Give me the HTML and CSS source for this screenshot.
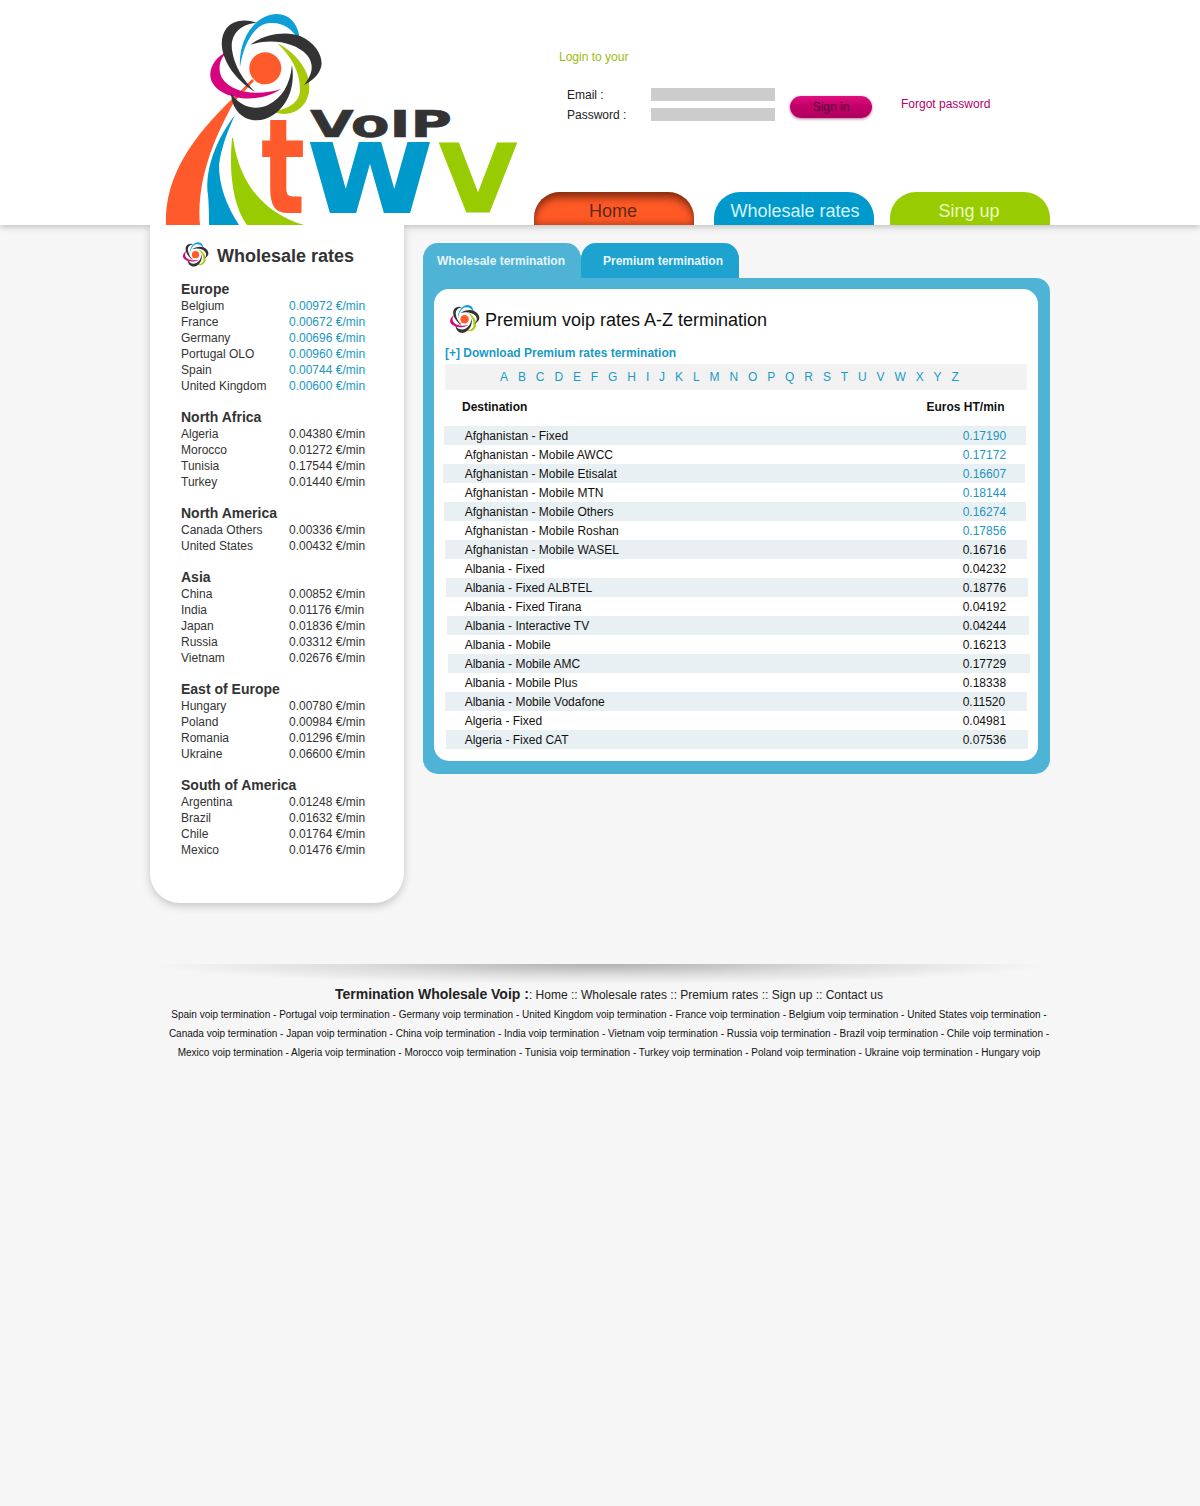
FILE: index.html
```html
<!DOCTYPE html>
<html lang="en">
<head>
<meta charset="utf-8">
<title>Wholesale rates</title>
<link rel="stylesheet" href="styles.css">
</head>
<body>
<header class="header">
  <div class="wrap header-in">
    <svg class="logo" viewBox="150 0 370 225" width="370" height="225" aria-label="tWV VoIP">
      <defs>
        <symbol id="flower" viewBox="206 11 118 113">
          <path fill="#ff5a2b" d="M232 100L252 79l2 2L234 102Z"/>
          <circle cx="265.300" cy="68.300" r="16" fill="#ff5a2b"/>
          <path fill="#d6057f" d="M228 51C213 58 207 72 212 82C220 98 255 106 281 89C260 96 232 94 222 78C217 68 220 58 228 51Z"/>
          <path fill="#a8c80a" d="M277 43C300 55 312 75 309 92C306 110 288 120 270 110C285 112 300 103 300 90C300 72 292 57 277 43Z"/>
          <path fill="#0f9fd8" d="M240 67C238 40 255 14 277 14C292 14 300 28 300 43C293 28 282 22 270 23C255 24 244 42 240 67Z"/>
          <path fill="#333" d="M255 92C228 75 218 50 223 35C228 20 245 18 257 23C240 24 230 35 232 50C234 65 243 80 255 92Z"/>
          <path fill="#333" d="M250 45C262 35 285 30 300 36C318 44 325 60 320 70C317 77 310 82 304 85C312 75 315 65 307 55C295 42 270 38 250 45Z"/>
          <path fill="#333" d="M292 65C296 90 285 112 265 119C250 124 232 115 231 93C240 107 255 111 268 105C282 98 290 85 292 65Z"/>
        </symbol>
      </defs>
      <path fill="#ff5a2b" d="M232 99C195 135 164 175 166 225L200 225C197 190 207 150 234 102Z"/>
      <path fill="#0099cc" d="M235 115C212 145 205 175 208 195C209 207 209 216 209 225L239 225C226 205 219 185 219 165C221 148 228 130 235 115Z"/>
      <path fill="#99cc00" d="M232 138C229 170 232 205 247 225L304 225C270 215 240 190 233 138Z"/>
      <use href="#flower" x="206" y="11" width="118" height="113"/>
      <text class="logo-t" x="261" y="213" textLength="44" lengthAdjust="spacingAndGlyphs">t</text>
      <text class="logo-voip" x="310" y="137" textLength="142" lengthAdjust="spacingAndGlyphs">VoIP</text>
      <text class="logo-w" x="308" y="211.500" textLength="124" lengthAdjust="spacingAndGlyphs">W</text>
      <text class="logo-v" x="439" y="211.500" textLength="78" lengthAdjust="spacingAndGlyphs">V</text>
    </svg>
    <div class="head-right">
      <div class="login">
        <p class="login-title">Login to your</p>
        <div class="login-form">
          <div class="fields">
            <div class="field"><span class="field-label">Email :</span><span class="input"></span></div>
            <div class="field"><span class="field-label">Password :</span><span class="input"></span></div>
          </div>
          <a class="signin">Sign in</a>
          <a class="forgot">Forgot password</a>
        </div>
      </div>
      <nav class="nav">
        <a class="nav-item nav-home">Home</a>
        <a class="nav-item nav-rates">Wholesale rates</a>
        <a class="nav-item nav-sign">Sing up</a>
      </nav>
    </div>
  </div>
</header>

<div class="wrap content">
  <aside class="side">
    <div class="side-title"><svg class="icon-s"><use href="#flower"/></svg><span>Wholesale rates</span></div>
    <section class="group">
      <h3>Europe</h3>
      <div class="rate blue"><span>Belgium</span><b>0.00972 €/min</b></div>
      <div class="rate blue"><span>France</span><b>0.00672 €/min</b></div>
      <div class="rate blue"><span>Germany</span><b>0.00696 €/min</b></div>
      <div class="rate blue"><span>Portugal OLO</span><b>0.00960 €/min</b></div>
      <div class="rate blue"><span>Spain</span><b>0.00744 €/min</b></div>
      <div class="rate blue"><span>United Kingdom</span><b>0.00600 €/min</b></div>
    </section>
    <section class="group">
      <h3>North Africa</h3>
      <div class="rate"><span>Algeria</span><b>0.04380 €/min</b></div>
      <div class="rate"><span>Morocco</span><b>0.01272 €/min</b></div>
      <div class="rate"><span>Tunisia</span><b>0.17544 €/min</b></div>
      <div class="rate"><span>Turkey</span><b>0.01440 €/min</b></div>
    </section>
    <section class="group">
      <h3>North America</h3>
      <div class="rate"><span>Canada Others</span><b>0.00336 €/min</b></div>
      <div class="rate"><span>United States</span><b>0.00432 €/min</b></div>
    </section>
    <section class="group">
      <h3>Asia</h3>
      <div class="rate"><span>China</span><b>0.00852 €/min</b></div>
      <div class="rate"><span>India</span><b>0.01176 €/min</b></div>
      <div class="rate"><span>Japan</span><b>0.01836 €/min</b></div>
      <div class="rate"><span>Russia</span><b>0.03312 €/min</b></div>
      <div class="rate"><span>Vietnam</span><b>0.02676 €/min</b></div>
    </section>
    <section class="group">
      <h3>East of Europe</h3>
      <div class="rate"><span>Hungary</span><b>0.00780 €/min</b></div>
      <div class="rate"><span>Poland</span><b>0.00984 €/min</b></div>
      <div class="rate"><span>Romania</span><b>0.01296 €/min</b></div>
      <div class="rate"><span>Ukraine</span><b>0.06600 €/min</b></div>
    </section>
    <section class="group">
      <h3>South of America</h3>
      <div class="rate"><span>Argentina</span><b>0.01248 €/min</b></div>
      <div class="rate"><span>Brazil</span><b>0.01632 €/min</b></div>
      <div class="rate"><span>Chile</span><b>0.01764 €/min</b></div>
      <div class="rate"><span>Mexico</span><b>0.01476 €/min</b></div>
    </section>
  </aside>

  <main class="main">
    <div class="tabs">
      <a class="tab tab-a">Wholesale termination</a>
      <a class="tab tab-b">Premium termination</a>
    </div>
    <div class="panel">
      <div class="card">
        <div class="card-title"><svg class="icon-m"><use href="#flower"/></svg><h1>Premium voip rates A-Z termination</h1></div>
        <a class="download">[+] Download Premium rates termination</a>
        <div class="alpha">
          <a>A</a><a>B</a><a>C</a><a>D</a><a>E</a><a>F</a><a>G</a><a>H</a><a>I</a><a>J</a><a>K</a><a>L</a><a>M</a><a>N</a><a>O</a><a>P</a><a>Q</a><a>R</a><a>S</a><a>T</a><a>U</a><a>V</a><a>W</a><a>X</a><a>Y</a><a>Z</a>
        </div>
        <div class="thead"><span>Destination</span><span>Euros HT/min</span></div>
        <div class="rows">
          <div class="row o1 blue"><span>Afghanistan - Fixed</span><span class="num">0.17190</span></div>
          <div class="row o1 blue"><span>Afghanistan - Mobile AWCC</span><span class="num">0.17172</span></div>
          <div class="row o0 blue"><span>Afghanistan - Mobile Etisalat</span><span class="num">0.16607</span></div>
          <div class="row o1 blue"><span>Afghanistan - Mobile MTN</span><span class="num">0.18144</span></div>
          <div class="row o1 blue"><span>Afghanistan - Mobile Others</span><span class="num">0.16274</span></div>
          <div class="row o1 blue"><span>Afghanistan - Mobile Roshan</span><span class="num">0.17856</span></div>
          <div class="row o2"><span>Afghanistan - Mobile WASEL</span><span class="num">0.16716</span></div>
          <div class="row o2"><span>Albania - Fixed</span><span class="num">0.04232</span></div>
          <div class="row o3"><span>Albania - Fixed ALBTEL</span><span class="num">0.18776</span></div>
          <div class="row o3"><span>Albania - Fixed Tirana</span><span class="num">0.04192</span></div>
          <div class="row o4"><span>Albania - Interactive TV</span><span class="num">0.04244</span></div>
          <div class="row o4"><span>Albania - Mobile</span><span class="num">0.16213</span></div>
          <div class="row o5"><span>Albania - Mobile AMC</span><span class="num">0.17729</span></div>
          <div class="row o5"><span>Albania - Mobile Plus</span><span class="num">0.18338</span></div>
          <div class="row o2"><span>Albania - Mobile Vodafone</span><span class="num">0.11520</span></div>
          <div class="row o2"><span>Algeria - Fixed</span><span class="num">0.04981</span></div>
          <div class="row o3"><span>Algeria - Fixed CAT</span><span class="num">0.07536</span></div>
        </div>
      </div>
    </div>
  </main>
</div>

<footer class="wrap footer">
  <div class="sep"></div>
  <div class="foot-text">
    <p class="foot-nav"><strong>Termination Wholesale Voip :</strong>: Home :: Wholesale rates :: Premium rates :: Sign up :: Contact us</p>
    <p class="foot-links">Spain voip termination - Portugal voip termination - Germany voip termination - United Kingdom voip termination - France voip termination - Belgium voip termination - United States voip termination -<br>Canada voip termination - Japan voip termination - China voip termination - India voip termination - Vietnam voip termination - Russia voip termination - Brazil voip termination - Chile voip termination -<br>Mexico voip termination - Algeria voip termination - Morocco voip termination - Tunisia voip termination - Turkey voip termination - Poland voip termination - Ukraine voip termination - Hungary voip</p>
  </div>
</footer>
</body>
</html>
```
FILE: styles.css
```css
* { box-sizing: border-box; }
html, body { margin: 0; padding: 0; }
body {
  background: #f6f6f6;
  color: #222;
  font-family: "Liberation Sans", Arial, sans-serif;
  font-size: 12px;
  min-height: 1506px;
}
p, h1, h3 { margin: 0; }
.wrap { width: 900px; margin: 0 auto; }

/* header */
.header {
  background: #fff;
  height: 225px;
  box-shadow: 0 2px 6px rgba(0, 0, 0, .22);
}
.header-in { display: flex; height: 225px; }
.logo { flex: none; display: block; width: 370px; height: 225px; margin-right: 14px; }
.logo-t { font: 700 132px "DejaVu Sans", sans-serif; fill: #ff5a2b; }
.logo-voip { font: 700 38px "DejaVu Sans", sans-serif; fill: #333; stroke: #333; stroke-width: .6px; }
.logo-w { font: 700 95px "DejaVu Sans", sans-serif; fill: #0099cc; stroke: #0099cc; stroke-width: 2px; }
.logo-v { font: 700 95px "DejaVu Sans", sans-serif; fill: #99cc00; stroke: #99cc00; stroke-width: 1px; }

.head-right { width: 516px; display: flex; flex-direction: column; }
.login { height: 192px; padding: 50px 0 0 25px; }
.login-title { color: #99bb11; line-height: 14px; }
.login-form { display: flex; margin-top: 24px; padding-left: 8px; }
.fields { width: 208px; }
.field { display: flex; height: 20px; align-items: flex-start; }
.field-label { width: 84px; line-height: 14px; color: #222; }
.input { width: 124px; height: 13px; background: #ccc; }
.signin {
  width: 82px; height: 22px; margin: 8px 0 0 15px;
  border-radius: 11px;
  background: linear-gradient(#e0107e, #c4006a 45%, #b00060);
  box-shadow: 0 1px 3px rgba(120, 0, 70, .55);
  color: #4f0a38; text-align: center; line-height: 22px;
}
.forgot { margin: 9px 0 0 29px; color: #b3006b; line-height: 14px; }

.nav { display: flex; height: 33px; }
.nav-item {
  width: 160px; height: 33px;
  border-radius: 26px 26px 0 0;
  text-align: center; font-size: 18px; line-height: 38px;
}
.nav-home {
  background: #ff5a26; color: #5c2a1a; padding-right: 2px;
  box-shadow: inset 0 7px 8px -2px rgba(90, 30, 10, .8), inset 0 -3px 5px rgba(150, 50, 20, .45);
}
.nav-rates { background: #0099cc; color: #d5f5ff; margin-left: 20px; padding-left: 2px; }
.nav-sign { background: #99cc00; color: #eafac0; margin-left: 16px; padding-right: 2px; }

/* content */
.content { display: flex; align-items: flex-start; }
.side {
  position: relative;
  width: 254px;
  background: #fff;
  border-radius: 0 0 30px 30px;
  padding: 16px 0 30px 31px;
  box-shadow: 0 3px 8px rgba(0, 0, 0, .2);
  clip-path: inset(0 -20px -20px -20px);
  color: #333;
}
.side-title { display: flex; align-items: center; height: 27px; margin-bottom: 13px; padding-left: 1px; font-size: 18px; font-weight: 700; }
.side-title span { padding-top: 3px; }
.icon-s { width: 27px; height: 27px; margin-right: 8px; flex: none; }
.group { margin-bottom: 16px; }
.group h3 { font-size: 14px; line-height: 16px; font-weight: 700; color: #333; }
.rate { display: flex; height: 16px; line-height: 18px; }
.rate span { width: 108px; flex: none; }
.rate b { font-weight: 400; }
.rate.blue b { color: #2196bf; }

.main { width: 627px; margin-left: 19px; padding-top: 18px; }
.tabs { display: flex; }
.tab {
  width: 158px; height: 35px;
  border-radius: 15px 15px 0 0;
  color: #e6f6fb; font-weight: 700; text-align: center; line-height: 36px;
}
.tab-a { background: #4fb3d5; padding-right: 2px; }
.tab-b { background: #1ea2cf; padding-left: 6px; }
.panel {
  background: #4fb3d5;
  border-radius: 0 14px 15px 15px;
  padding: 11px 12px 13px 11px;
}
.card { background: #fff; border-radius: 15px; padding: 15px 0 12px 11px; }
.card-title { display: flex; align-items: center; height: 30px; padding-left: 4px; }
.card-title h1 { font-size: 18px; font-weight: 400; color: #111; padding-top: 2px; }
.icon-m { width: 31px; height: 30px; margin-right: 5px; flex: none; }
.download { display: block; margin-top: 12px; color: #1a9ac6; font-weight: 700; line-height: 14px; }
.alpha {
  display: flex; gap: 9.900px;
  width: 582px; height: 26px; margin-top: 4px;
  padding-left: 55px;
  background: #f2f2f2;
  line-height: 26px; color: #1a9ac6;
}
.thead {
  display: flex; justify-content: space-between;
  width: 582px; height: 36px; padding: 10px 22.500px 0 17px;
  font-weight: 700; color: #111; line-height: 14px;
}
.row {
  display: flex; width: 582px; height: 19px; line-height: 21px; color: #111;
  margin-left: calc(var(--o) - 2px);
  padding-left: calc(21.700px - var(--o));
}
.row span:first-child { width: 498px; flex: none; }
.row:nth-child(odd) { background: #e9f0f3; }
.row.blue .num { color: #2196bf; }
.o0 { --o: 0px; }
.o1 { --o: 1px; }
.o2 { --o: 2px; }
.o3 { --o: 3px; }
.o4 { --o: 4px; }
.o5 { --o: 5px; }

/* footer */
.footer { margin-top: 61px; }
.sep {
  height: 20px;
  background: radial-gradient(ellipse 50% 100% at 50% 0, #b0b0b0, rgba(190, 190, 190, .45) 55%, rgba(245, 245, 245, 0) 100%);
}
.foot-text { padding-left: 18px; text-align: center; color: #111; }
.foot-nav { line-height: 20px; color: #222; }
.foot-nav strong { font-size: 14px; color: #222; }
.foot-links { font-size: 10px; line-height: 19px; }
```
